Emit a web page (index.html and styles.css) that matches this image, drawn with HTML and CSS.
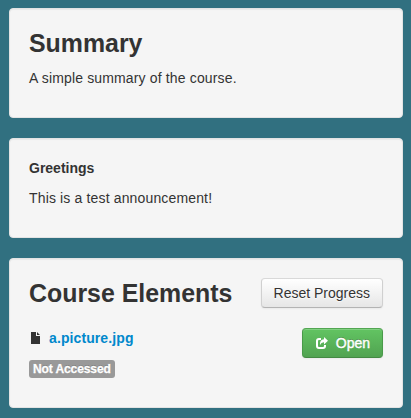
FILE: index.html
```
<!DOCTYPE html>
<html lang="en">
<head>
  <meta charset="UTF-8" />
  <meta name="viewport" content="width=device-width, initial-scale=1.0"/>
  <title>Course</title>
  <link rel="stylesheet" href="styles.css">
</head>
<body>
  <div class="container">
    <div class="well summary">
      <h3>Summary</h3>
      <p>A simple summary of the course.</p>
    </div>

    <div class="well announcement">
      <p class="title">Greetings</p>
      <p>This is a test announcement!</p>
    </div>

    <div class="well elements">
      <div class="row heading">
        <h3>Course Elements</h3>
        <button class="btn">Reset Progress</button>
      </div>
      <div class="row">
        <div class="element">
          <a class="file" href="#">
            <svg class="icon-file" width="9" height="12" viewBox="0 0 9 12">
              <path fill="#333" d="M0 0h5v4h4v8H0zM6 0l3 3H6z"/>
            </svg>
            <span>a.picture.jpg</span>
          </a>
          <span class="label">Not Accessed</span>
        </div>
        <button class="btn btn-success">
          <svg class="icon-share" width="12" height="12" viewBox="0 0 12 12">
            <path fill="none" stroke="#fff" stroke-width="2" d="M5 2H3Q1 2 1 4v5q0 2 2 2h4q2 0 2-2V8"/>
            <path fill="#fff" d="M8 0l4 3.700L8 7.400V5.200Q5.300 5 4 8Q3.500 2.500 8 2.200z"/>
          </svg>
          <span>Open</span>
        </button>
      </div>
    </div>
  </div>
</body>
</html>
```
FILE: styles.css
```
body {
  font-family: "Liberation Sans", Arial, sans-serif;
  font-size: 14px;
  line-height: 20px;
  margin: 0;
  color: #333;
  background-color: #317080;
}

.container {
  padding: 8px 8px 0 9px;
}

.well {
  box-sizing: border-box;
  padding: 19px;
  margin-bottom: 20px;
  background-color: #f5f5f5;
  border: 1px solid #e3e3e3;
  border-radius: 4px;
  box-shadow: inset 0 1px 1px rgba(0, 0, 0, 0.05);
}

.summary {
  height: 110px;
  padding-top: 14px;
}

.announcement {
  height: 100px;
}

.elements {
  height: 150px;
  margin-bottom: 0;
}

h3 {
  margin: 0;
  font-size: 24.9px;
  line-height: 40px;
}

p {
  margin: 0 0 10px;
  letter-spacing: 0.15px;
}

.summary p {
  margin-top: 5px;
}

.title {
  font-weight: bold;
  letter-spacing: 0;
}

.row {
  display: flex;
  justify-content: space-between;
  align-items: flex-start;
}

.heading {
  height: 50px;
}

.heading h3 {
  line-height: 30px;
}

.btn {
  box-sizing: border-box;
  display: flex;
  align-items: center;
  height: 30px;
  padding: 4px 12px;
  font-family: inherit;
  font-size: 14px;
  line-height: 20px;
  color: #333;
  text-shadow: 0 1px 1px rgba(255, 255, 255, 0.75);
  background-image: linear-gradient(to bottom, #fff, #e6e6e6);
  border: 1px solid #ccc;
  border-color: #d9d9d9 #d0d0d0 #b3b3b3;
  border-radius: 4px;
  box-shadow: inset 0 1px 0 rgba(255, 255, 255, 0.2), 0 1px 2px rgba(0, 0, 0, 0.05);
  cursor: pointer;
}

.btn-success {
  gap: 8px;
  padding-left: 13px;
  color: #fff;
  text-shadow: 0 -1px 0 rgba(0, 0, 0, 0.25);
  -webkit-text-stroke: 0.4px #fff;
  background-image: linear-gradient(to bottom, #62c462, #51a351);
  border-color: #52a652 #499a49 #438943;
}

.element {
  display: flex;
  flex-direction: column;
  align-items: flex-start;
  gap: 12px;
}

.file {
  display: flex;
  align-items: center;
  gap: 9px;
  padding-left: 2px;
  font-weight: bold;
  letter-spacing: 0.1px;
  color: #08c;
  text-decoration: none;
}

.label {
  padding: 2px 4px;
  font-size: 12px;
  font-weight: bold;
  line-height: 14px;
  letter-spacing: -0.1px;
  color: #fff;
  text-shadow: 0 -1px 0 rgba(0, 0, 0, 0.25);
  -webkit-text-stroke: 0.3px #fff;
  background-color: #999;
  border-radius: 3px;
}
```
